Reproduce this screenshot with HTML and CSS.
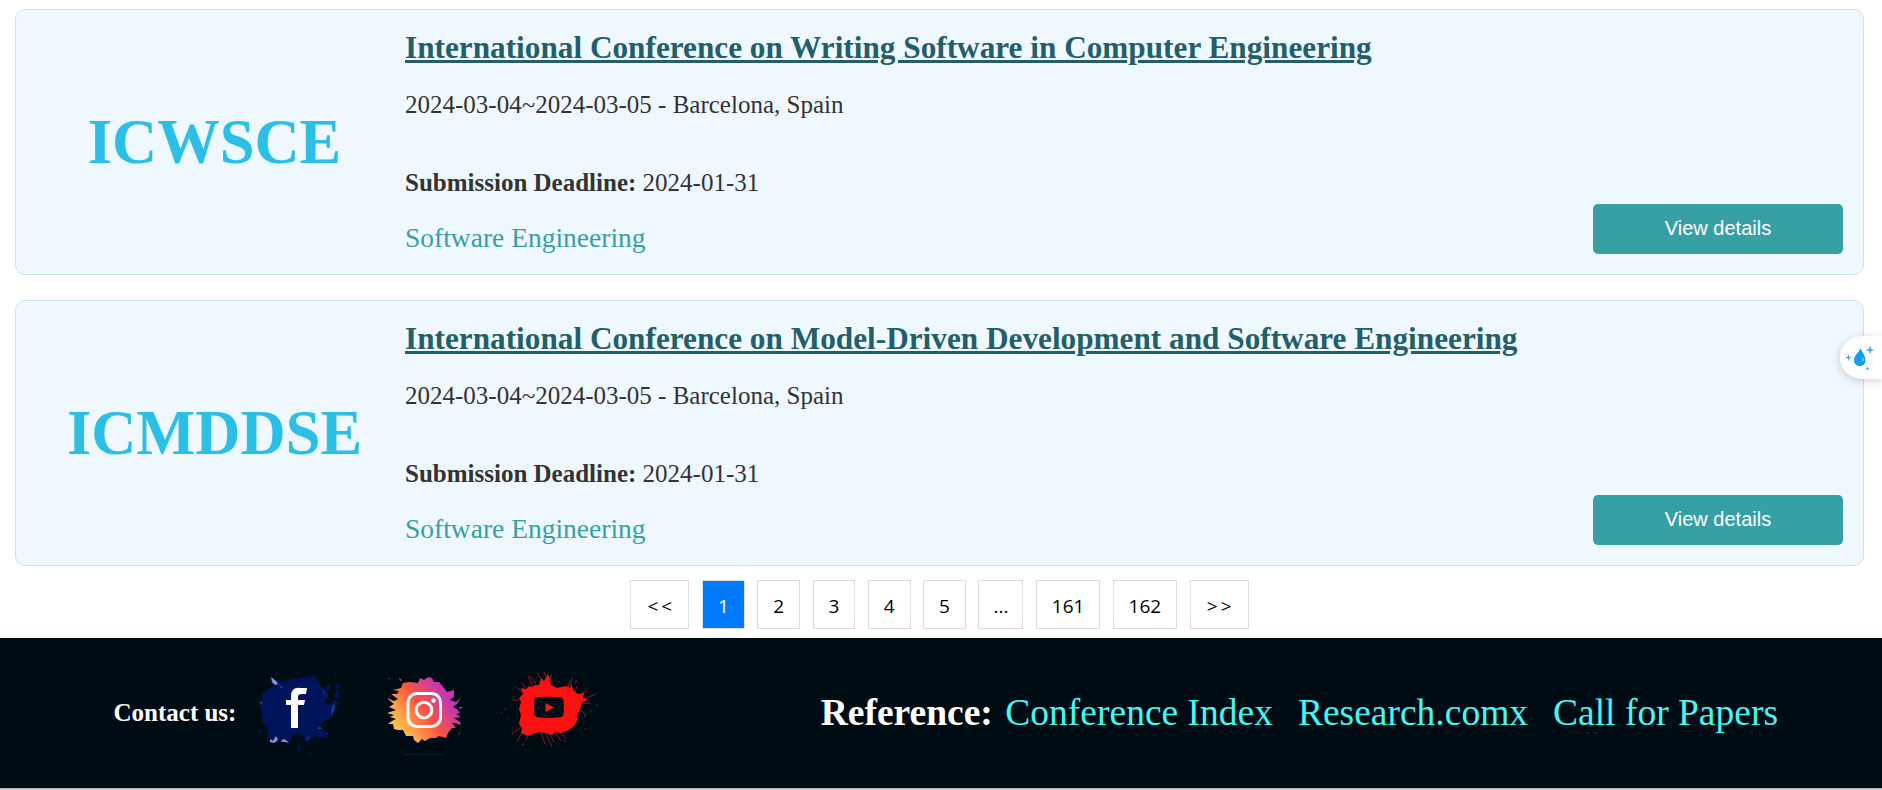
FILE: index.html
```html
<!DOCTYPE html>
<html lang="en">
<head>
<meta charset="utf-8">
<title>Conferences</title>
<link rel="stylesheet" href="styles.css">
</head>
<body>
<main class="list">
  <article class="card">
    <div class="acronym">ICWSCE</div>
    <div class="info">
      <a class="title">International Conference on Writing Software in Computer Engineering</a>
      <p class="date">2024-03-04~2024-03-05 - Barcelona, Spain</p>
      <p class="deadline"><b>Submission Deadline:</b> 2024-01-31</p>
      <p class="topic">Software Engineering</p>
    </div>
    <button class="details">View details</button>
  </article>
  <article class="card">
    <div class="acronym">ICMDDSE</div>
    <div class="info">
      <a class="title">International Conference on Model-Driven Development and Software Engineering</a>
      <p class="date">2024-03-04~2024-03-05 - Barcelona, Spain</p>
      <p class="deadline"><b>Submission Deadline:</b> 2024-01-31</p>
      <p class="topic">Software Engineering</p>
    </div>
    <button class="details">View details</button>
  </article>
</main>
<nav class="pages">
  <a class="page arrow">&lt;&lt;</a>
  <a class="page active">1</a>
  <a class="page">2</a>
  <a class="page">3</a>
  <a class="page">4</a>
  <a class="page">5</a>
  <a class="page dots">...</a>
  <a class="page wide">161</a>
  <a class="page wide">162</a>
  <a class="page arrow">&gt;&gt;</a>
</nav>
<footer class="footer">
  <div class="contact">
    <b class="contact-label">Contact us:</b>
    <svg class="social facebook" viewBox="0 0 120 120">
      <path fill="#00145c" d="M31 27 37 30 44 32 51 29 60 28 69 28 74 25 78 31 81 37 86 40 89 45 85 52 89 55 94 50 98 51 96 59 92 67 86 70 80 75 77 79 84 80 89 84 88 88 80 87 75 86 70 90 66 93 64 86 58 83 52 86 50 93 44 89 37 92 30 93 28 87 28 78 23 73 22 65 20 55 23 51 22 45 27 40 32 37 37 36 31 32z"/>
      <path fill="#00145c" d="M94 48l2-6 1-2 3 2-2 6zM86 38l3-4 1 4-2 3zM93 25l3-2 1 1-2 2zM95 36l3-2 2 2-3 3zM57 100l2-5 1 1-1 6zM69 103l3-1-1 3zM81 104l3 0-1 2zM35 24l2-2 1 4zM55 25l1-5 1 5zM18 51l3 1-1 3zM18 81l5-2-3 4z"/>
      <path fill="#8494cc" d="M31 27l5 4 2 3-3 1-3-3zM20.500 52l1-1v4zM30 89l3 2 3-5 2 4-4 3-4-1zM43 89l3 1 3 3-4-1-4 0z"/>
      <path fill="#20388a" d="M39 35l4 2-2 2zM92 56l3-2-1 7-3 4zM77 79l3-3 2 3zM66 89l4-4-3 6zM82 39l3 4-1 2z"/>
      <path fill="#fff" d="M51 78V55h-5v-5h5v-4c0-6 4-9 9-8h7l-1 6h-4c-3 0-4 1-4 3v3h7l-1 5h-6v23z"/>
    </svg>
    <svg class="social" viewBox="0 0 120 120">
      <defs><linearGradient id="insta" x1="0" y1=".85" x2="1" y2=".2"><stop offset="0" stop-color="#ffd34d"/><stop offset=".25" stop-color="#ffa64b"/><stop offset=".5" stop-color="#ff543f"/><stop offset=".8" stop-color="#c837ab"/><stop offset="1" stop-color="#b035bb"/></linearGradient></defs>
      <path fill="url(#insta)" d="M33 33 40 32 48 33 50 28 54 30 58 27 62 28 64 32 69 32 74 38 77 42 84 40 84 47 80 50 86 52 91 47 87 54 83 57 87 59 90 63 86 64 91 67 84 68 90 72 91 75 85 73 82 73 86 78 82 78 78 83 76 88 69 86 66 88 60 88 55 91 52 89 48 93 44 90 43 86 36 86 33 80 28 80 24 79 23 74 18 74 22 71 26 69 20 67 24 65 17 63 26 60 19 57 24 54 17 48 24 51 28 49 21 44 27 44 29 41 23 40 31 38z"/>
      <path fill="#d64b65" d="M18 28h2v1zM29 28l3 2-2 1zM89 57l4 0-3 2zM88 84l2-1v1z"/>
      <rect x="38" y="43.500" width="32.500" height="33" rx="9" fill="none" stroke="#fff" stroke-width="3"/>
      <circle cx="54" cy="60" r="7.800" fill="none" stroke="#fff" stroke-width="3"/>
      <circle cx="63.500" cy="50.500" r="2.300" fill="#fff"/>
      <path stroke="#141a20" d="M34 104.500h40"/>
    </svg>
    <svg class="social" viewBox="0 0 120 120">
      <path fill="#ff1010" d="M31 38 36 39 39 36 42 37 45 35 49 35 51 28 54 31 58 24 60 29 61 35 67 38 76 36 81 38 81 34 84 41 88 44 94 43 93 48 98 49 92 53 90 60 87 65 87 71 83 77 77 81 71 83 65 82 62 85 55 83 49 82 43 84 38 86 31 83 32 78 29 74 31 65 29 59 31 52 29 48 33 44z"/>
      <path fill="none" stroke="#a32128" stroke-width=".8" d="M43 37 38 26M46 34 39 25M54 32 47 23M57 30 54 22M60 29 62 24M32 42 26 37M29 50 22 50M80 38 82 28M78 37 80 31M90 45 97 40M94 49 106 44M89 58 96 65M31 77 22 84M32 82 27 92M38 85 36 90M51 82 55 94M55 82 62 97M59 83 64 92M65 82 71 91M69 82 76 88M35 38 32 32M85 42 87 36M90 54 101 53"/>
      <path fill="#71242b" d="M68 31l2 1-2 1zM10 63l2-1v1zM15 58l1 1-2 1zM94 65l2 1-2 1zM101 60l1 1-2 1zM106 54l2 1-1 1zM32 94l2-1-1 3zM95 78l2 0v1zM74 90l2 1-2 1zM16 68l2 0v1zM86 29l1 3-2 2z"/>
      <path fill="#000c14" d="M47 47.300Q59 46 70 47.300 73 47.500 73.500 51 74.500 57 73.500 64 73 67 70 67.300 59 68.600 48 67.300 44.500 67 44.300 63 43.400 57 44.300 51 44.500 47.600 47 47.300z"/>
      <path fill="#f31a20" d="M55.500 53 64 57.500 55.500 62z"/>
    </svg>
  </div>
  <div class="reference">
    <b>Reference:</b>
    <a>Conference Index</a>
    <a>Research.comx</a>
    <a>Call for Papers</a>
  </div>
</footer>
<div class="after-footer"></div>
<aside class="widget">
  <svg width="32" height="32" viewBox="0 0 32 32">
    <path fill="#149cf0" d="M15.500 6C17 11 20.500 13 20.500 18.500a5.700 5.700 0 0 1-11.500 0C9 13 14 11 15.500 6z"/>
    <path fill="#b7e3ff" d="M17.500 15.500c1.500 1 1.500 3 0 4.500z"/>
    <path fill="#35aef5" d="M25 3.500 26 7l3.500 1L26 9 25 12.500 24 9l-3.500-1L24 7zM3.500 12l.8 2.700 2.700.8-2.700.8-.8 2.700-.8-2.700L0 15.500l2.700-.8zM22.500 24.500l.6 1.500 1.500.6-1.500.6-.6 1.500-.6-1.500-1.500-.6 1.500-.6z"/>
  </svg>
</aside>
</body>
</html>
```
FILE: styles.css
```css
* { box-sizing: border-box; }
body { margin: 0; background: #fff; color: #333; font: 25px "Liberation Serif", "Times New Roman", serif; overflow: hidden; }
p { margin: 0; }
.list { display: flex; flex-direction: column; gap: 25px; padding: 9px 18px 0 15px; }
.card { display: flex; height: 266px; background: #f0f8ff; border: 1px solid #cde3ea; border-radius: 10px; padding: 0 20px 20px 0; }
.acronym { width: 389px; padding-left: 8px; height: 264px; display: flex; align-items: center; justify-content: center; font-size: 62.5px; font-weight: bold; color: #2bbfe6; }
.info { flex: 1; display: flex; flex-direction: column; align-items: flex-start; line-height: 28px; white-space: nowrap; }
.title { margin-top: 20px; line-height: 36px; font-size: 31.25px; font-weight: bold; color: #225f69; text-decoration: underline; text-decoration-thickness: 3px; }
.date { margin-top: 25px; }
.deadline { margin-top: 50px; }
.topic { margin-top: 26px; font-size: 27.5px; line-height: 30px; color: #36a0a4; }
.details { align-self: flex-end; width: 250px; height: 50px; margin: 0; border: 0; padding: 0 0 2px; border-radius: 5px; background: #36a0a4; color: #fff; font: 20px "Liberation Sans", Arial, sans-serif; }
.pages { display: flex; justify-content: center; gap: 12.5px; padding: 14px 3px 9px 0; font: 19px/50px "Open Sans", sans-serif; color: #000; }
.page { width: 42.8px; height: 49px; border: 1px solid #ddd; text-align: center; }
.page.active { background: #007bff; color: #fff; }
.page.arrow { width: 59.4px; letter-spacing: 3px; padding-left: 3px; }
.page.dots { width: 45px; }
.page.wide { width: 64.3px; }
.footer { display: flex; height: 150px; background: #000c14; color: #fff; }
.contact { display: flex; align-items: center; padding-left: 113.5px; }
.contact-label { width: 126.5px; white-space: nowrap; }
.social { width: 120px; height: 120px; margin-top: -6px; }
.facebook { margin-right: 10px; }
.reference { display: flex; align-items: center; margin-left: auto; padding: 0 104px 2px 0; font-size: 37.5px; white-space: nowrap; }
.reference a { margin-left: 25px; color: #43f9f5; }
.reference b + a { margin-left: 12.5px; }
.after-footer { height: 2px; background: #dcd9de; border-top: 1px solid #aeb0b3; }
.widget { position: absolute; right: 0; top: 336px; width: 42px; height: 43px; border-radius: 22px 0 0 22px; background: #fff; box-shadow: 0 2px 10px rgba(0,0,0,.18); padding: 6px 0 0 5px; }
```
